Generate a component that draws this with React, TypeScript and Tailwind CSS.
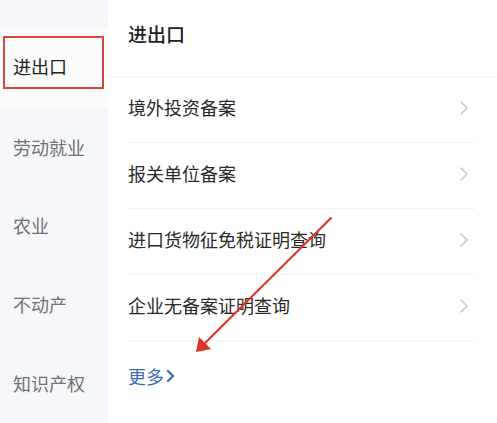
import React from "react";

const items = ["境外投资备案", "报关单位备案", "进口货物征免税证明查询", "企业无备案证明查询"];
const side = ["劳动就业", "农业", "不动产", "知识产权"];

function Chevron() {
  return (
    <svg width="10" height="16" viewBox="0 0 10 16" className="shrink-0">
      <path d="M2 2 L8 8 L2 14" fill="none" stroke="#c4c6ca" strokeWidth="1.6" strokeLinecap="round" strokeLinejoin="round" />
    </svg>
  );
}

export default function App() {
  return (
    <div
      className="relative flex h-[423px] w-[497px] overflow-hidden bg-white"
      style={{ fontFamily: '"Noto Sans CJK SC", "Noto Sans", sans-serif' }}
    >
      <div className="flex w-[108px] shrink-0 flex-col bg-[#f5f7fa] pt-[28px]">
        <div className="relative flex h-[80px] items-center bg-[#fcfcfd] pb-[2px] pl-[13px] text-[18px] text-[#222]">
          <div className="absolute left-[3px] top-[8px] h-[53px] w-[101px] border-2 border-[#d8453d]" />
          进出口
        </div>
        {side.map((s) => (
          <div key={s} className="flex h-[79px] items-center pl-[13px] text-[18px] text-[#707275]">
            {s}
          </div>
        ))}
      </div>
      <div className="flex flex-1 flex-col pl-[20px]">
        <div className="flex h-[76px] items-center pb-[8px] text-[19px] font-medium text-[#1f1f1f]">进出口</div>
        <div className="-ml-[20px] h-px bg-[#f1f2f4]" />
        {items.map((t) => (
          <div key={t} className="flex h-[66px] flex-col">
            <div className="flex flex-1 items-center justify-between pb-[4px] pr-[28px] text-[18px] text-[#2a2a2a]">
              <span>{t}</span>
              <Chevron />
            </div>
            <div className="mr-[22px] h-px bg-[#f1f2f4]" />
          </div>
        ))}
        <div className="flex h-[72px] items-center gap-[2px] pb-[2px] text-[18px] text-[#3d6db3]">
          <span>更多</span>
          <svg width="9" height="14" viewBox="0 0 9 14">
            <path d="M2 2 L7 7 L2 12" fill="none" stroke="#3d6db3" strokeWidth="2.4" strokeLinecap="round" strokeLinejoin="round" />
          </svg>
        </div>
      </div>
      <svg className="pointer-events-none absolute left-0 top-0" width="497" height="423">
        <line x1="331" y1="218" x2="201" y2="347" stroke="#e0302a" strokeWidth="2" strokeLinecap="round" />
        <path d="M196 352 L199 337 L211 349 Z" fill="#e0302a" />
      </svg>
    </div>
  );
}
